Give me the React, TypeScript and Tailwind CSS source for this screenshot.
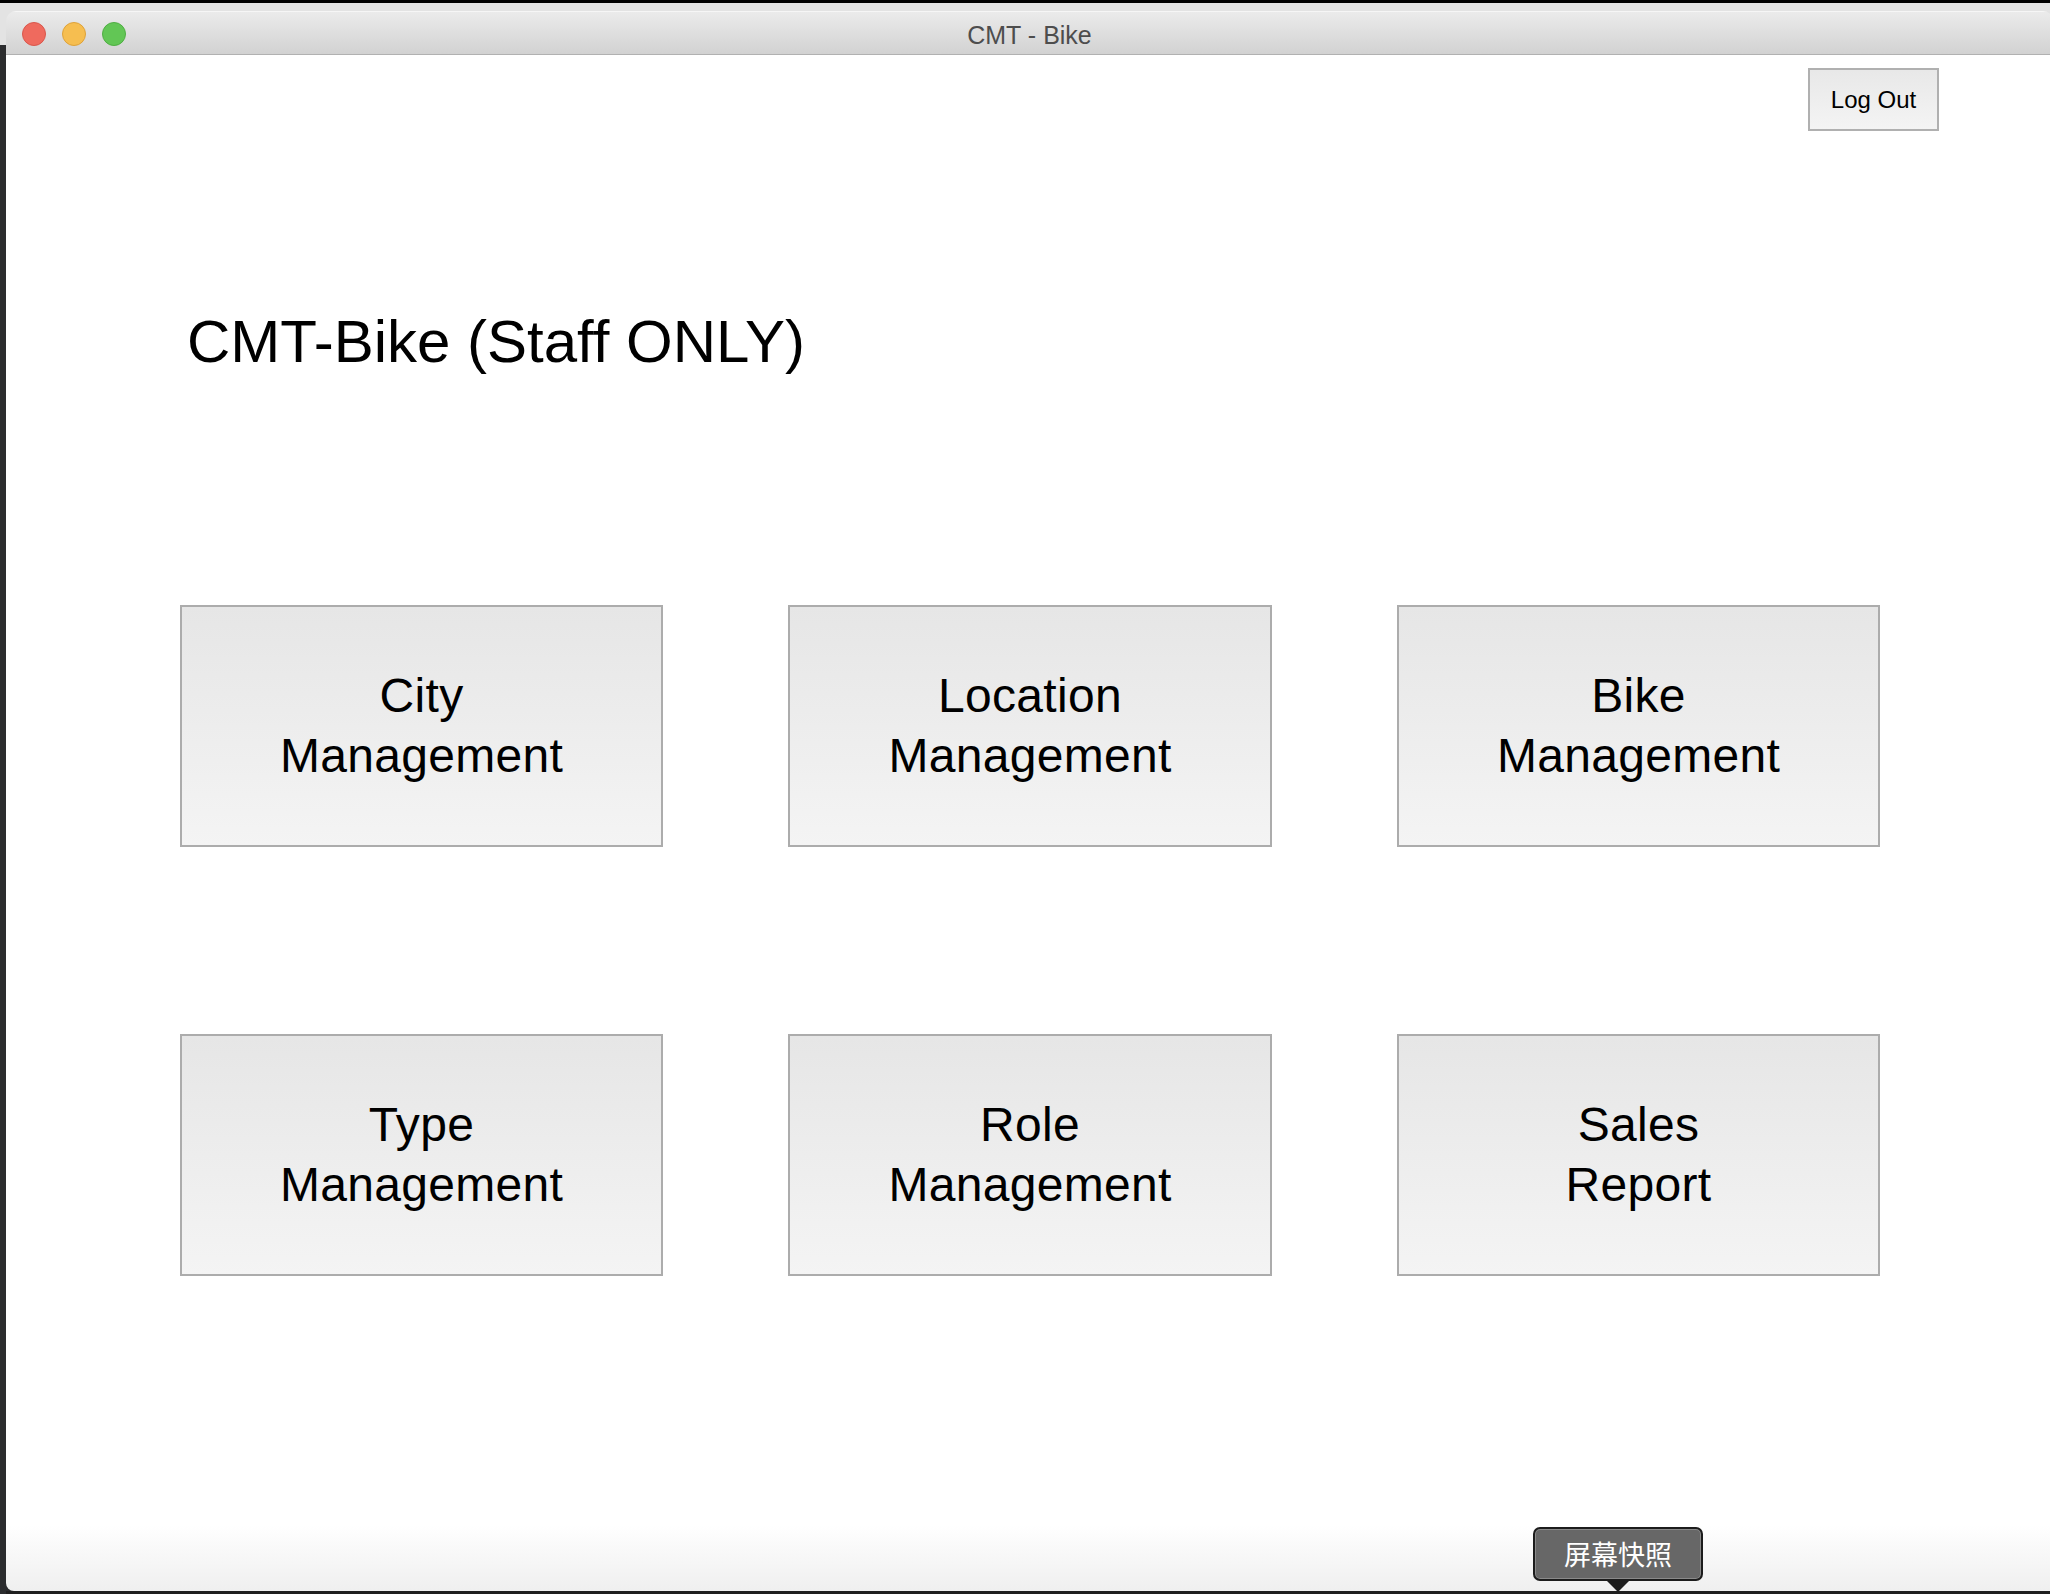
import React from "react";

const tiles: string[][] = [
  ["City", "Management"],
  ["Location", "Management"],
  ["Bike", "Management"],
  ["Type", "Management"],
  ["Role", "Management"],
  ["Sales", "Report"],
];

function TrafficLights() {
  return (
    <div className="flex items-center gap-[16px] pl-[16px] pt-[2px]">
      <span className="w-[24px] h-[24px] rounded-full bg-[#ef6a5e] border border-[#d9574c]" />
      <span className="w-[24px] h-[24px] rounded-full bg-[#f6be50] border border-[#dea23a]" />
      <span className="w-[24px] h-[24px] rounded-full bg-[#62c655] border border-[#4fae43]" />
    </div>
  );
}

function Tile({ lines }: { lines: string[] }) {
  return (
    <button className="h-[242px] border-2 border-[#acacac] bg-gradient-to-b from-[#e6e6e6] to-[#f4f4f4] flex flex-col items-center justify-center text-[48px] leading-[60px] tracking-[0.3px] text-black">
      {lines.map((l) => (
        <span key={l}>{l}</span>
      ))}
    </button>
  );
}

// screenshot hint shown by macOS over the window
function SnapshotTip() {
  return (
    <div className="absolute left-[1533px] top-[1527px] flex flex-col items-center">
      <div className="w-[170px] h-[54px] rounded-[7px] bg-[#676767] border-2 border-[#1c1c1c] shadow-[inset_0_0_0_1px_#8a8a8a] flex items-center justify-center text-white text-[27px] font-['Noto_Sans_CJK_SC',sans-serif]">
        屏幕快照
      </div>
      <div className="w-0 h-0 -mt-[2px] border-l-[13px] border-r-[13px] border-t-[13px] border-l-transparent border-r-transparent border-t-[#1c1c1c]" />
    </div>
  );
}

export default function App() {
  return (
    <div className="relative w-[2050px] h-[1594px] overflow-hidden bg-[#2b2c2e] flex flex-col font-['Liberation_Sans',Arial,sans-serif]">
      <div className="h-[3px] bg-black shrink-0" />
      <div className="flex flex-1 min-h-0">
        {/* desktop edge left of the window */}
        <div className="w-[6px] shrink-0 flex flex-col">
          <div className="h-[42px] bg-[#e3e3e3]" />
          <div className="flex-1 bg-[#2b2c2e]" />
        </div>
        <div className="w-[2047px] shrink-0 flex flex-col bg-[linear-gradient(to_bottom,#e3e3e3_0,#e3e3e3_50%,#2b2c2e_50%)]">
          <div className="h-[8px] shrink-0" />
          <div className="flex-1 flex flex-col rounded-t-[10px] rounded-bl-[8px] overflow-hidden">
            {/* title bar */}
            <div className="h-[44px] shrink-0 grid grid-cols-[1fr_auto_1fr] items-center bg-gradient-to-b from-[#ebebeb] to-[#d2d2d2] border-b border-[#b1b1b1] border-t border-t-[#f6f6f6]">
              <TrafficLights />
              <div className="text-[25px] text-[#4d4d4d] pt-[5px]">CMT - Bike</div>
              <div />
            </div>
            {/* content */}
            <div className="flex-1 flex flex-col bg-[linear-gradient(to_bottom,#ffffff_0,#ffffff_calc(100%-66px),#efefef_100%)]">
              <div className="flex justify-end pt-[13px] pr-[114px]">
                <button className="w-[131px] h-[63px] border-2 border-[#b0b0b0] bg-gradient-to-b from-[#e8e8e8] to-[#f4f4f4] text-[24px] text-black">
                  Log Out
                </button>
              </div>
              <h1 className="pl-[181px] mt-[175px] text-[60px] leading-[72px] text-black">
                CMT-Bike (Staff ONLY)
              </h1>
              <div className="pl-[174px] mt-[227px] grid grid-cols-[483px_484px_483px] gap-x-[125px] gap-y-[187px]">
                {tiles.map((t) => (
                  <Tile key={t.join(" ")} lines={t} />
                ))}
              </div>
            </div>
          </div>
          <div className="h-[3px] shrink-0 bg-[#1f1f1f]" />
        </div>
      </div>
      <SnapshotTip />
    </div>
  );
}
